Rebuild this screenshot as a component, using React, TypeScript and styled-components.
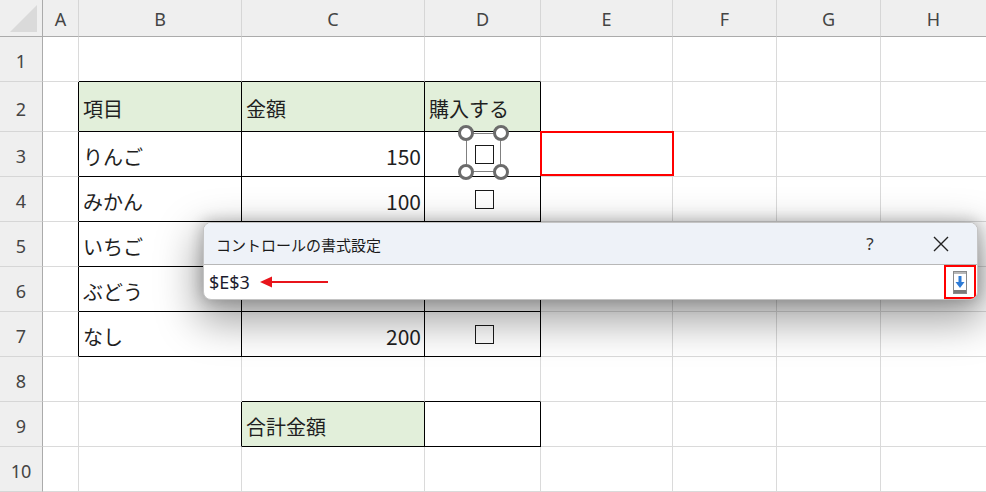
import React from 'react';
import styled, { createGlobalStyle } from 'styled-components';

const GlobalStyle = createGlobalStyle`
  html, body {
    margin: 0;
    padding: 0;
    background: #ffffff;
  }
  body {
    font-family: "Noto Sans CJK JP", "Noto Sans", sans-serif;
    color: #1f1f1f;
  }
`;

const COL_WIDTHS = [43, 36, 163, 183, 116, 132, 104, 104, 106];
const ROW_HEIGHTS = [37, 45, 50, 45, 45, 45, 45, 45, 45, 45, 45];
const COL_NAMES = ['A', 'B', 'C', 'D', 'E', 'F', 'G', 'H'];

type CellData = { text?: string; num?: boolean; check?: boolean; fill?: boolean };

// rows 1..10, columns A..H (index 0..7)
const DATA: Record<number, Record<number, CellData>> = {
  2: {
    1: { text: '項目', fill: true },
    2: { text: '金額', fill: true },
    3: { text: '購入する', fill: true },
  },
  3: { 1: { text: 'りんご' }, 2: { text: '150', num: true }, 3: { check: true } },
  4: { 1: { text: 'みかん' }, 2: { text: '100', num: true }, 3: { check: true } },
  5: { 1: { text: 'いちご' }, 2: { text: '120', num: true }, 3: { check: true } },
  6: { 1: { text: 'ぶどう' }, 2: { text: '300', num: true }, 3: { check: true } },
  7: { 1: { text: 'なし' }, 2: { text: '200', num: true }, 3: { check: true } },
  9: { 2: { text: '合計金額', fill: true }, 3: {} },
};

const inTable = (r: number, c: number) =>
  (r >= 2 && r <= 7 && c >= 1 && c <= 3) || (r === 9 && c >= 2 && c <= 3);

const Page = styled.div`
  position: relative;
  width: 986px;
  height: 492px;
  overflow: hidden;
`;

const Sheet = styled.div`
  display: grid;
  grid-template-columns: ${COL_WIDTHS.map((w) => `${w}px`).join(' ')};
  grid-template-rows: ${ROW_HEIGHTS.map((h) => `${h}px`).join(' ')};
`;

const Corner = styled.div`
  position: relative;
  background: #efefef;
  border-right: 1px solid #ababab;
  border-bottom: 1px solid #ababab;
  box-sizing: border-box;

  svg {
    position: absolute;
    left: 8px;
    top: 4px;
  }
`;

const ColHead = styled.div`
  display: flex;
  align-items: center;
  justify-content: center;
  background: #efefef;
  border-right: 1px solid #d6d6d6;
  border-bottom: 1px solid #ababab;
  box-sizing: border-box;
  font-family: "Noto Sans", sans-serif;
  font-size: 18px;
  color: #444;
  padding-top: 2px;
`;

const RowHead = styled.div`
  display: flex;
  align-items: center;
  justify-content: center;
  background: #efefef;
  border-right: 1px solid #ababab;
  border-bottom: 1px solid #d6d6d6;
  box-sizing: border-box;
  font-family: "Noto Sans", sans-serif;
  font-size: 18px;
  color: #444;
  padding-top: 4px;
`;

const Cell = styled.div<{ $fill?: boolean; $rb?: boolean; $bb?: boolean; $num?: boolean }>`
  position: relative;
  display: flex;
  align-items: center;
  justify-content: ${(p) => (p.$num ? 'flex-end' : 'flex-start')};
  padding: 4px ${(p) => (p.$num ? '3px' : '0')} 0 ${(p) => (p.$num ? '0' : '4px')};
  background: ${(p) => (p.$fill ? '#e2efda' : '#ffffff')};
  border-right: 1px solid ${(p) => (p.$rb ? '#000' : '#dadada')};
  border-bottom: 1px solid ${(p) => (p.$bb ? '#000' : '#dadada')};
  box-sizing: border-box;
  font-size: ${(p) => (p.$num ? '21px' : '20px')};
  white-space: nowrap;
`;

const CheckBox = styled.span`
  display: block;
  width: 19px;
  height: 19px;
  margin: -3px auto 0;
  border: 1px solid #1a1a1a;
  box-sizing: border-box;
  background: #fff;
`;

const Selection = styled.div`
  position: absolute;
  left: 41px;
  top: 1px;
  width: 35px;
  height: 39px;
  border: 1.5px solid #808080;
  box-sizing: border-box;
  z-index: 2;
`;

const Handle = styled.span<{ $x: 'l' | 'r'; $y: 't' | 'b' }>`
  position: absolute;
  width: 16px;
  height: 16px;
  border-radius: 50%;
  border: 3px solid #6b6b6b;
  background: #fff;
  box-sizing: border-box;
  ${(p) => (p.$x === 'l' ? 'left: -9px;' : 'right: -9px;')}
  ${(p) => (p.$y === 't' ? 'top: -9px;' : 'bottom: -9px;')}
`;

const RedFrame = styled.div`
  position: absolute;
  left: -1px;
  top: -1px;
  right: -2px;
  bottom: 0;
  border: 2px solid #ff0000;
  z-index: 2;
`;

const Dialog = styled.div`
  position: absolute;
  left: 203px;
  top: 222px;
  width: 773px;
  z-index: 10;
  border: 1px solid #c4c4c4;
  border-radius: 8px;
  overflow: hidden;
  background: #fff;
  box-shadow: 0 16px 40px 6px rgba(0, 0, 0, 0.36), 0 0 14px 2px rgba(0, 0, 0, 0.2);
`;

const TitleBar = styled.div`
  display: flex;
  align-items: center;
  height: 41px;
  padding: 0 0 0 12px;
  background: #eef2f8;
  border-bottom: 1px solid #b8b8b8;
  font-size: 15px;
  color: #1a1a1a;
`;

const Title = styled.span`
  flex: 1;
  padding-top: 1px;
`;

const HelpButton = styled.span`
  width: 20px;
  margin-right: 46px;
  text-align: center;
  font-family: "Noto Sans", sans-serif;
  font-size: 17px;
  color: #333;
`;

const CloseButton = styled.span`
  display: flex;
  align-items: center;
  justify-content: center;
  width: 30px;
  margin-right: 21px;
`;

const InputRow = styled.div`
  display: flex;
  align-items: center;
  height: 34px;
`;

const RefText = styled.span`
  padding-left: 5px;
  font-family: "Noto Sans", sans-serif;
  font-size: 18px;
  color: #1c1c2e;
`;

const Arrow = styled.svg`
  margin-left: 10px;
  flex: none;
`;

const Spacer = styled.div`
  flex: 1;
`;

const CollapseButton = styled.div`
  display: flex;
  align-items: center;
  justify-content: center;
  width: 32px;
  height: 34px;
  margin-right: 1px;
  border: 2px solid #ff0000;
  box-sizing: border-box;
`;

const App = () => {
  const cells: React.ReactNode[] = [];

  cells.push(
    <Corner key="corner">
      <svg width="30" height="29" viewBox="0 0 30 29">
        <polygon points="2,28 29,28 29,1" fill="#dadada" />
      </svg>
    </Corner>
  );
  COL_NAMES.forEach((n) => cells.push(<ColHead key={`h${n}`}>{n}</ColHead>));

  for (let r = 1; r <= 10; r++) {
    cells.push(<RowHead key={`r${r}`}>{r}</RowHead>);
    for (let c = 0; c < 8; c++) {
      const d = DATA[r]?.[c] ?? {};
      const rb = inTable(r, c) || inTable(r, c + 1);
      const bb = inTable(r, c) || inTable(r + 1, c);
      cells.push(
        <Cell key={`c${r}-${c}`} $fill={d.fill} $rb={rb} $bb={bb} $num={d.num}>
          {d.text}
          {d.check && <CheckBox />}
          {r === 3 && c === 3 && (
            <Selection>
              <Handle $x="l" $y="t" />
              <Handle $x="r" $y="t" />
              <Handle $x="l" $y="b" />
              <Handle $x="r" $y="b" />
            </Selection>
          )}
          {r === 3 && c === 4 && <RedFrame />}
        </Cell>
      );
    }
  }

  return (
    <Page>
      <GlobalStyle />
      <Sheet>{cells}</Sheet>

      <Dialog>
        <TitleBar>
          <Title>コントロールの書式設定</Title>
          <HelpButton>?</HelpButton>
          <CloseButton>
            <svg width="16" height="16" viewBox="0 0 16 16">
              <path d="M1 1 L15 15 M15 1 L1 15" stroke="#222" strokeWidth="1.4" />
            </svg>
          </CloseButton>
        </TitleBar>
        <InputRow>
          <RefText>$E$3</RefText>
          <Arrow width="68" height="14" viewBox="0 0 68 14">
            <path d="M10 7 H68" stroke="#e8141b" strokeWidth="2" />
            <polygon points="0,7 12,1.5 12,12.5" fill="#e8141b" />
          </Arrow>
          <Spacer />
          <CollapseButton>
            <svg width="14" height="23" viewBox="0 0 14 23">
              <rect x="0.5" y="0.5" width="13" height="22" fill="#fff" stroke="#8a8a8a" />
              <rect x="1" y="1" width="12" height="2" fill="#b8b8b8" />
              <path d="M5.5 5 H8.5 V11 H11.5 L7 17 L2.5 11 H5.5 Z" fill="#2d7bd6" />
              <rect x="1" y="19" width="12" height="3" fill="#7a7a7a" />
            </svg>
          </CollapseButton>
        </InputRow>
      </Dialog>
    </Page>
  );
};

export default App;
